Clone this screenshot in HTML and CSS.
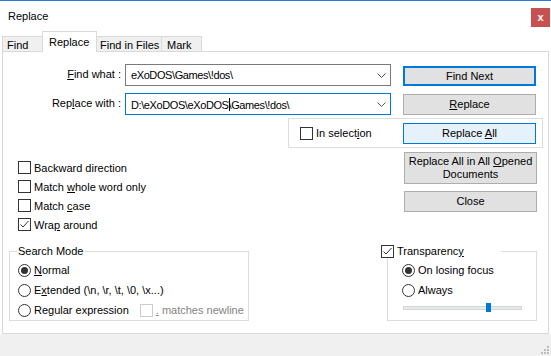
FILE: index.html
```html
<!DOCTYPE html>
<html lang="en">
<head>
    <meta charset="UTF-8">
    <title>Replace</title>
    <link rel="stylesheet" href="styles.css">
</head>
<body>
    <div class="window">
        <div class="titlebar">
            <span class="title">Replace</span>
            <span class="close">x</span>
        </div>

        <div class="tabs">
            <div class="tab tab-find">Find</div>
            <div class="tab tab-replace active">Replace</div>
            <div class="tab tab-files">Find in Files</div>
            <div class="tab tab-mark">Mark</div>
        </div>

        <div class="panel">
            <div class="row row-find">
                <span class="field-label"><u>F</u>ind what :</span>
                <div class="combo">
                    <span class="combo-text">eXoDOS\Games\!dos\</span>
                    <svg class="chevron" width="9" height="5" viewBox="0 0 9 5"><path d="M0.5 0.5 L4.5 4.5 L8.5 0.5" fill="none" stroke="#555" stroke-width="1"/></svg>
                </div>
                <button class="btn btn-default">Find Next</button>
            </div>

            <div class="row row-replace">
                <span class="field-label">Rep<u>l</u>ace with :</span>
                <div class="combo combo-focus">
                    <span class="combo-text">D:\eXoDOS\eXoDOS<span class="caret"></span>\Games\!dos\</span>
                    <svg class="chevron" width="9" height="5" viewBox="0 0 9 5"><path d="M0.5 0.5 L4.5 4.5 L8.5 0.5" fill="none" stroke="#555" stroke-width="1"/></svg>
                </div>
                <button class="btn btn-replace"><u>R</u>eplace</button>
            </div>

            <div class="selection-group">
                <label class="check">
                    <span class="box"></span>
                    <span>In select<u>i</u>on</span>
                </label>
                <button class="btn btn-hover">Replace <u>A</u>ll</button>
            </div>

            <div class="middle">
                <div class="options">
                    <label class="check"><span class="box"></span><span>Backward direction</span></label>
                    <label class="check"><span class="box"></span><span>Match <u>w</u>hole word only</span></label>
                    <label class="check"><span class="box"></span><span>Match <u>c</u>ase</span></label>
                    <label class="check"><span class="box checked"><svg width="11" height="11" viewBox="0 0 11 11"><path d="M1.5 5.5 L4 8 L9.5 2" fill="none" stroke="#333" stroke-width="1"/></svg></span><span>Wra<u>p</u> around</span></label>
                </div>
                <div class="side-buttons">
                    <button class="btn btn-tall">Replace All in All <u>O</u>pened<br>Documents</button>
                    <button class="btn btn-close">Close</button>
                </div>
            </div>

            <div class="bottom">
                <fieldset class="group search-mode">
                    <legend>Search Mode</legend>
                    <label class="radio-row"><span class="radio on"></span><span><u>N</u>ormal</span></label>
                    <label class="radio-row"><span class="radio"></span><span>E<u>x</u>tended (\n, \r, \t, \0, \x...)</span></label>
                    <div class="radio-row">
                        <span class="radio"></span>
                        <span>Re<u>g</u>ular expression</span>
                        <span class="box disabled"></span>
                        <span class="disabled-text"><u>.</u> matches newline</span>
                    </div>
                </fieldset>

                <fieldset class="group transparency">
                    <legend>
                        <span class="box checked"><svg width="11" height="11" viewBox="0 0 11 11"><path d="M1.5 5.5 L4 8 L9.5 2" fill="none" stroke="#333" stroke-width="1"/></svg></span>
                        <span>Transparenc<u>y</u></span>
                    </legend>
                    <label class="radio-row"><span class="radio on"></span><span>On losing focus</span></label>
                    <label class="radio-row"><span class="radio"></span><span>Always</span></label>
                    <div class="slider">
                        <span class="thumb" style="left: 82px"></span>
                    </div>
                </fieldset>
            </div>
        </div>

        <div class="footer">
            <svg class="grip" width="8" height="8" viewBox="0 0 8 8">
                <rect x="6" y="0" width="2" height="2" fill="#bcbcbc"/>
                <rect x="3" y="3" width="2" height="2" fill="#bcbcbc"/>
                <rect x="6" y="3" width="2" height="2" fill="#bcbcbc"/>
                <rect x="0" y="6" width="2" height="2" fill="#bcbcbc"/>
                <rect x="3" y="6" width="2" height="2" fill="#bcbcbc"/>
                <rect x="6" y="6" width="2" height="2" fill="#bcbcbc"/>
            </svg>
        </div>
    </div>
</body>
</html>
```

FILE: styles.css
```css
* {
    box-sizing: border-box;
}

body {
    margin: 0;
    font-family: "Liberation Sans", Arial, sans-serif;
    font-size: 11px;
    color: #000;
    background: #fff;
}

u {
    text-decoration-thickness: 1px;
    text-underline-offset: 1px;
}

.window {
    width: 551px;
    height: 356px;
    border-top: 1px solid #2b79d7;
    display: flex;
    flex-direction: column;
    background: #fff;
}

/* title bar */
.titlebar {
    height: 30px;
    flex: none;
    display: flex;
    justify-content: space-between;
    align-items: center;
    padding-left: 8px;
}

.close {
    align-self: flex-start;
    margin-top: 7px;
    margin-right: 1px;
    width: 19px;
    height: 19px;
    background: #c75050;
    color: #fff;
    font-weight: bold;
    font-size: 11px;
    display: flex;
    align-items: center;
    justify-content: center;
    padding-bottom: 2px;
}

/* tabs */
.tabs {
    height: 20px;
    flex: none;
    display: flex;
    align-items: flex-end;
    padding-left: 2px;
}

.tab {
    height: 15px;
    border: 1px solid #d9d9d9;
    border-bottom: none;
    background: #f0f0f0;
    display: flex;
    align-items: center;
    margin-left: -1px;
    padding-top: 1px;
}

.tab-find {
    margin-left: 0;
    width: 41px;
    padding-left: 4px;
}

.tab-replace {
    width: 55px;
    padding-left: 6px;
}

.tab-files {
    width: 66px;
    padding-left: 3px;
}

.tab-mark {
    width: 41px;
    padding-left: 5px;
}

.tab.active {
    height: 21px;
    margin-bottom: -1px;
    background: #fff;
    position: relative;
    z-index: 1;
    padding-top: 0;
    padding-bottom: 1px;
}

/* main panel */
.panel {
    width: 547px;
    height: 283px;
    flex: none;
    margin-left: 2px;
    border: 1px solid #d9d9d9;
    background: #fff;
}

.row {
    display: flex;
    align-items: flex-start;
    height: 22px;
}

.row-find {
    margin-top: 12px;
}

.row-replace {
    margin-top: 7px;
}

.field-label {
    width: 118px;
    text-align: right;
    line-height: 21px;
}

.combo {
    width: 266px;
    height: 22px;
    margin-left: 4px;
    border: 1px solid #7a7a7a;
    display: flex;
    align-items: center;
    justify-content: space-between;
    padding: 0 4px 0 5px;
}

.combo-text {
    letter-spacing: -0.4px;
}

.combo-focus {
    border-color: #0078d7;
}

.caret {
    display: inline-block;
    width: 1px;
    height: 13px;
    background: #000;
    vertical-align: -2px;
    margin-right: -1px;
}

.chevron {
    display: block;
}

.btn {
    font-family: inherit;
    font-size: 11px;
    color: #000;
    width: 133px;
    height: 21px;
    background: #e1e1e1;
    border: 1px solid #adadad;
    padding: 0;
    margin: 0;
    line-height: 13px;
}

.row .btn {
    margin-left: 12px;
}

.btn-default {
    height: 20px;
    margin-top: 2px;
    border: 2px solid #0078d7;
}

.btn-replace {
    margin-top: 1px;
}

.btn-hover {
    background: #e5f1fb;
    border-color: #0078d7;
}

/* in selection group */
.selection-group {
    width: 255px;
    height: 30px;
    margin: 3px 0 0 285px;
    border: 1px solid #dcdcdc;
    display: flex;
    align-items: center;
    justify-content: space-between;
    padding: 0 6px 0 11px;
}

.check {
    display: flex;
    align-items: center;
    height: 19px;
}

.box {
    width: 13px;
    height: 13px;
    flex: none;
    border: 1px solid #333;
    background: #fff;
    margin-right: 3px;
    display: inline-flex;
    align-items: center;
    justify-content: center;
}

.box svg {
    display: block;
}

.box.disabled {
    border-color: #ccc;
    margin-left: 11px;
}

.disabled-text {
    color: #838383;
}

/* options and side buttons */
.middle {
    display: flex;
    justify-content: space-between;
    height: 86px;
}

.options {
    margin: 10px 0 0 15px;
}

.side-buttons {
    margin: 4px 11px 0 0;
    display: flex;
    flex-direction: column;
    gap: 7px;
}

.btn-tall {
    height: 32px;
}

/* group boxes */
.bottom {
    display: flex;
    align-items: flex-start;
    margin-top: 10px;
}

.group {
    margin: 0;
    border: 1px solid #dcdcdc;
    min-width: 0;
}

.group legend {
    line-height: 14px;
    height: 14px;
}

.search-mode {
    width: 240px;
    margin-left: 6px;
    padding: 2px 0 0 8px;
}

.search-mode legend {
    margin-left: -1px;
    padding: 0 1px;
}

.transparency {
    width: 150px;
    margin-left: 138px;
    padding: 2px 0 8px 14px;
}

.transparency legend {
    margin-left: -21px;
    padding: 0;
    width: 120px;
    display: flex;
    align-items: center;
}

.radio-row {
    display: flex;
    align-items: center;
    height: 20px;
    white-space: nowrap;
}

.radio {
    width: 13px;
    height: 13px;
    flex: none;
    border: 1px solid #333;
    border-radius: 50%;
    margin-right: 3px;
    display: flex;
    align-items: center;
    justify-content: center;
}

.radio.on::after {
    content: "";
    width: 7px;
    height: 7px;
    border-radius: 50%;
    background: #333;
}

.slider {
    position: relative;
    width: 119px;
    height: 4px;
    margin: 6px 0 2px 1px;
    background: #e7eaea;
    border: 1px solid #d6d6d6;
}

.thumb {
    position: absolute;
    top: -4px;
    width: 5px;
    height: 9px;
    background: #0078d7;
}

/* footer with size grip */
.footer {
    flex: 1;
    background: #f0f0f0;
    display: flex;
    justify-content: flex-end;
    align-items: flex-end;
    padding: 0 2px 2px 0;
}
```
